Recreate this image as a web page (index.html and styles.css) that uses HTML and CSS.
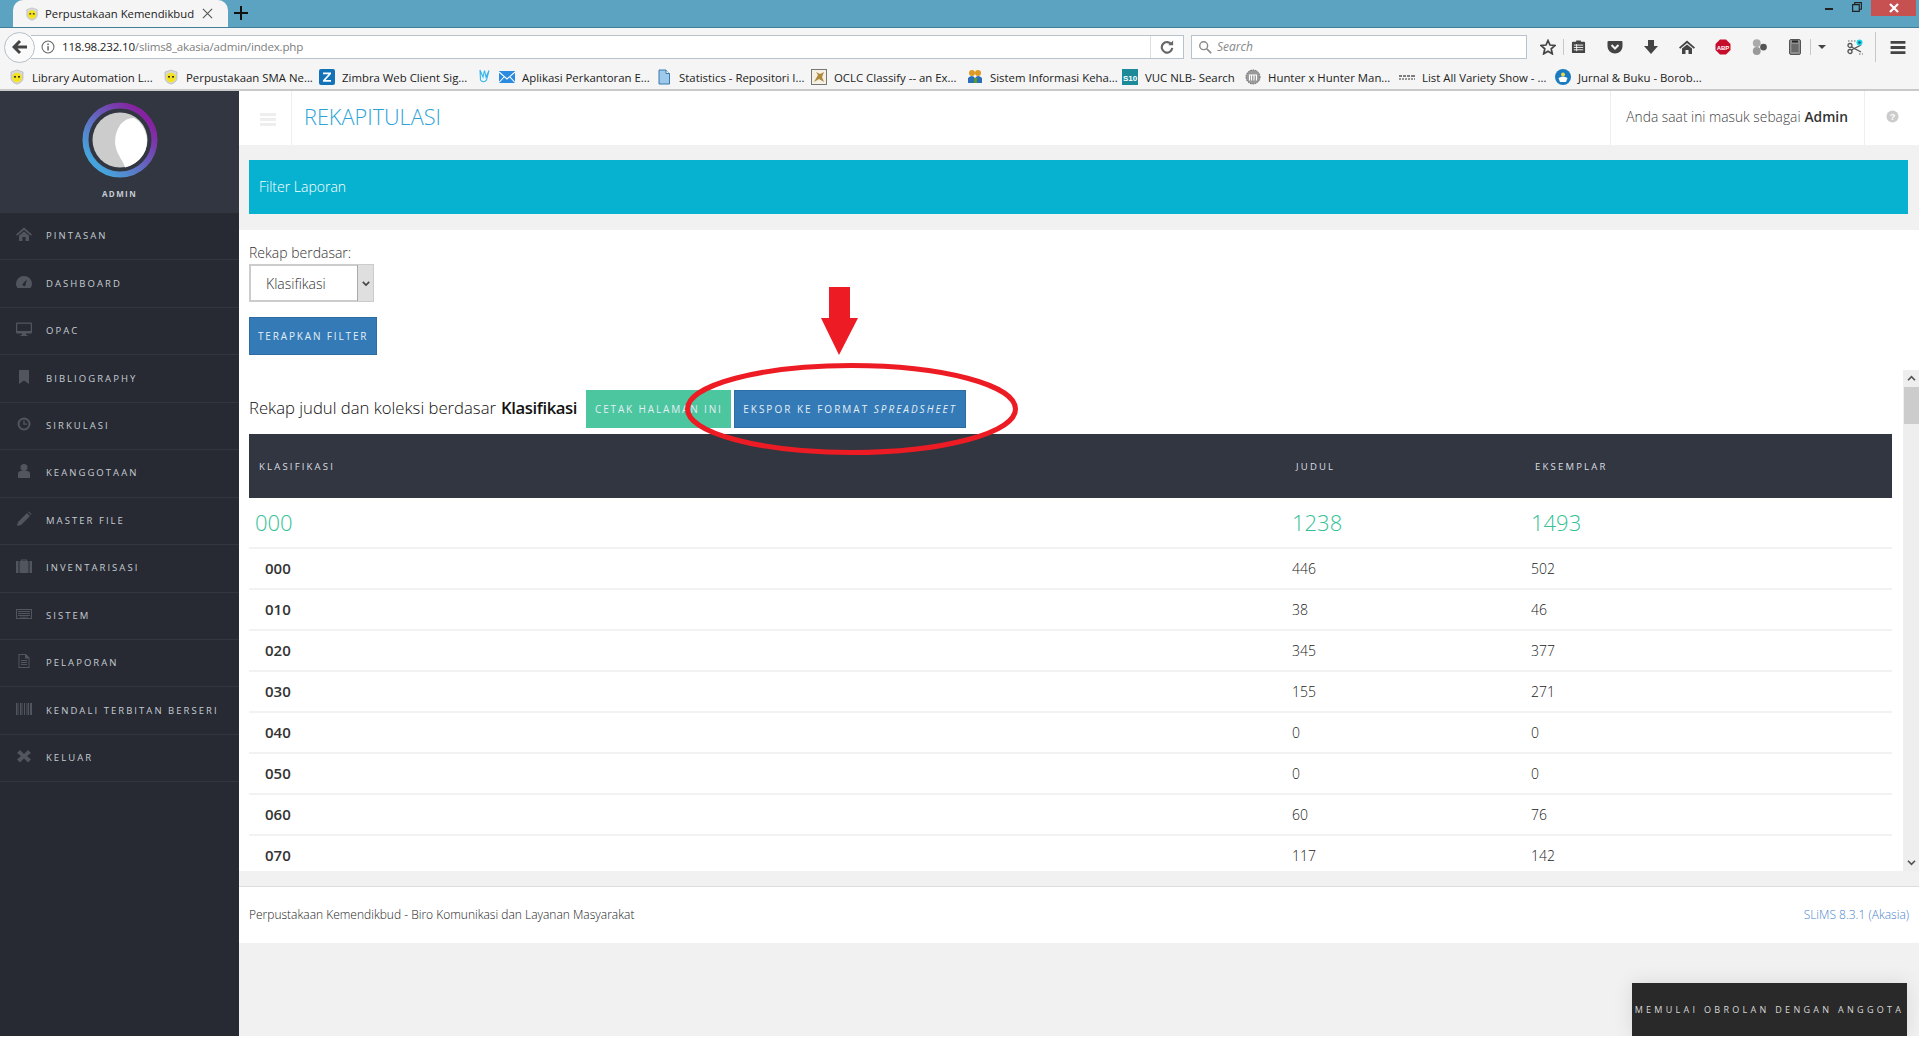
FILE: index.html
```html
<!DOCTYPE html>
<html lang="en">
<head>
  <meta charset="UTF-8" />
  <title>Rekapitulasi - Perpustakaan Kemendikbud</title>
  <link rel="stylesheet" href="styles.css">
</head>
<body>
  <svg class="defs" width="0" height="0" aria-hidden="true">
    <defs>
      <symbol id="fav-smile" viewBox="0 0 16 16">
        <path d="M8 1 L14 3 V9 C14 12 11 14.500 8 15 C5 14.500 2 12 2 9 V3 Z" fill="#d8d8d8" stroke="#aaa" stroke-width=".6"/>
        <circle cx="8" cy="8.500" r="4.800" fill="#f4e31c"/>
        <rect x="5" y="7" width="2" height="1.600" fill="#333"/>
        <rect x="9" y="7" width="2" height="1.600" fill="#333"/>
      </symbol>
      <linearGradient id="ring" x1="0" y1="1" x2="1" y2="0">
        <stop offset="0.150" stop-color="#46a5dc"/>
        <stop offset="0.850" stop-color="#8522a0"/>
      </linearGradient>
    </defs>
  </svg>

  <div class="window">
    <!-- browser chrome -->
    <div class="tabbar">
      <div class="tab">
        <svg class="fav" viewBox="0 0 16 16"><use href="#fav-smile"/></svg>
        <span class="tab-title">Perpustakaan Kemendikbud</span>
        <svg class="tab-close" viewBox="0 0 12 12"><path d="M1 1 L11 11 M11 1 L1 11" stroke="#555" stroke-width="1.200"/></svg>
      </div>
      <svg class="new-tab" viewBox="0 0 16 16"><path d="M8 1 V15 M1 8 H15" stroke="#111" stroke-width="2"/></svg>
      <div class="win-buttons">
        <span class="win-min"></span>
        <svg class="win-restore" viewBox="0 0 11 11"><path d="M3 2.500 V.700 H10.300 V8 H8.300 M.700 2.800 H8 V10.300 H.700 Z" fill="none" stroke="#222" stroke-width="1.300"/></svg>
        <div class="win-close"><svg viewBox="0 0 10 10" width="10" height="10"><path d="M1 1 L9 9 M9 1 L1 9" stroke="#fff" stroke-width="2.200"/></svg></div>
      </div>
    </div>

    <div class="toolbar">
      <div class="back-btn"><svg viewBox="0 0 16 16" width="16" height="16"><path d="M8 2 L2 8 L8 14 M2.500 8 H15" fill="none" stroke="#444" stroke-width="3"/></svg></div>
      <div class="urlbar">
        <svg class="info" viewBox="0 0 16 16"><circle cx="8" cy="8" r="6.800" fill="none" stroke="#666" stroke-width="1.200"/><rect x="7.200" y="7" width="1.700" height="5" fill="#666"/><rect x="7.200" y="4" width="1.700" height="1.800" fill="#666"/></svg>
        <span class="url"><span class="url-host">118.98.232.10</span>/slims8_akasia/admin/index.php</span>
        <span class="url-reload"><svg viewBox="0 0 16 16" width="14" height="14"><path d="M13 5 A6 6 0 1 0 14 9" fill="none" stroke="#666" stroke-width="2.400"/><path d="M9.500 6 H15 V.500 Z" fill="#666"/></svg></span>
      </div>
      <div class="searchbar">
        <svg viewBox="0 0 16 16" width="14" height="14"><circle cx="6.500" cy="6.500" r="4.500" fill="none" stroke="#888" stroke-width="1.600"/><path d="M10 10 L15 15" stroke="#888" stroke-width="2"/></svg>
        <span class="search-text">Search</span>
      </div>
      <div class="tools">
        <svg class="tool t-star" viewBox="0 0 16 16"><path d="M8 1.500 L10 6 L15 6.500 L11.200 9.800 L12.300 14.800 L8 12.200 L3.700 14.800 L4.800 9.800 L1 6.500 L6 6 Z" fill="none" stroke="#444" stroke-width="1.700"/></svg>
        <span class="tool-sep"></span>
        <svg class="tool t-list" viewBox="0 0 16 16"><path d="M2 3 H5.500 V1.500 H10.500 V3 H14 A1 1 0 0 1 15 4 V14 A1 1 0 0 1 14 15 H2 A1 1 0 0 1 1 14 V4 A1 1 0 0 1 2 3 Z" fill="#444"/><path d="M3 6.500 H13 M3 9 H13 M3 11.500 H13 M6 5.500 V13" stroke="#f4f4f4" stroke-width="1"/></svg>
        <svg class="tool t-pocket" viewBox="0 0 16 16"><path d="M1.500 2 H14.500 A1 1 0 0 1 15.500 3 V7.500 A7.500 7 0 0 1 .500 7.500 V3 A1 1 0 0 1 1.500 2 Z" fill="#444"/><path d="M4.500 6 L8 9.500 L11.500 6" fill="none" stroke="#f4f4f4" stroke-width="2"/></svg>
        <svg class="tool t-down" viewBox="0 0 16 16"><path d="M5 1 H11 V7 H15 L8 15 L1 7 H5 Z" fill="#444"/></svg>
        <svg class="tool t-home" viewBox="0 0 16 16"><path d="M8 1.500 L16 8.500 L14.800 9.800 L8 4 L1.200 9.800 L0 8.500 Z M3 9.500 L8 5.500 L13 9.500 V15 H9.500 V11 H6.500 V15 H3 Z" fill="#444"/></svg>
        <svg class="tool t-abp" viewBox="0 0 16 16"><path d="M5 .500 H11 L15.500 5 V11 L11 15.500 H5 L.500 11 V5 Z" fill="#c70d2c"/><text x="8" y="10.800" text-anchor="middle" class="abp-text">ABP</text></svg>
        <svg class="tool t-dots" viewBox="0 0 16 16"><circle cx="6" cy="4.500" r="3.500" fill="#aaa"/><circle cx="6" cy="11.500" r="3.500" fill="#999"/><circle cx="12" cy="8" r="3" fill="#555"/></svg>
        <svg class="tool t-card" viewBox="0 0 16 16"><rect x="2.500" y=".500" width="11" height="15" rx="1.500" fill="#8f8f8f" stroke="#555"/><rect x="5" y="1.500" width="6" height="2" fill="#222"/><path d="M4.500 6 H11.500 M4.500 8 H11.500 M4.500 10 H11.500 M4.500 12 H11.500" stroke="#444"/></svg>
        <span class="tool-sep"></span>
        <span class="tool-caret"></span>
        <svg class="tool t-scissors" viewBox="0 0 16 16"><circle cx="3" cy="12.500" r="2" fill="none" stroke="#555" stroke-width="1.300"/><circle cx="3" cy="6.500" r="2" fill="none" stroke="#555" stroke-width="1.300"/><path d="M4.500 11 L14 6 M4.500 8 L14 13" stroke="#555" stroke-width="1.400"/><path d="M1 2 H9 M12 15 H16" stroke="#666" stroke-dasharray="1.500 1.500"/><circle cx="12.500" cy="3.500" r="3" fill="#18dbe8"/><circle cx="12.500" cy="3.500" r="1.300" fill="#1b5a80"/></svg>
        <span class="tool-sep tall"></span>
        <svg class="tool t-menu" viewBox="0 0 16 14"><path d="M0 1.500 H16 M0 7 H16 M0 12.500 H16" stroke="#444" stroke-width="3"/></svg>
      </div>
    </div>

    <div class="bookmarks">
      <a class="bm bm-1"><svg viewBox="0 0 16 16"><use href="#fav-smile"/></svg>Library Automation L...</a>
      <a class="bm bm-2"><svg viewBox="0 0 16 16"><use href="#fav-smile"/></svg>Perpustakaan SMA Ne...</a>
      <a class="bm bm-3"><svg viewBox="0 0 16 16"><rect width="16" height="16" rx="2" fill="#1372b8"/><path d="M4 3.500 H12 V5 L6.500 11 H12 V12.800 H4 V11.300 L9.500 5.300 H4 Z" fill="#fff"/></svg>Zimbra Web Client Sig...</a>
      <a class="bm bm-4"><svg viewBox="0 0 16 16"><path d="M4 1 L7 8 L8.500 1.500 L10 8 L13 1.500 L10.500 11 A3.500 3.500 0 0 1 4.500 11 Z" fill="#eaf8ff" stroke="#37b4ea" stroke-width="1.100"/></svg></a>
      <a class="bm bm-5"><svg viewBox="0 0 16 16"><rect y="2" width="16" height="12" fill="#2a8be0"/><path d="M0 3 L8 10 L16 3 M0 13.500 L5.500 7.500 M16 13.500 L10.500 7.500" fill="none" stroke="#fff" stroke-width="1.100"/></svg>Aplikasi Perkantoran E...</a>
      <a class="bm bm-6"><svg viewBox="0 0 16 16"><path d="M3 1 H10 L13.500 4.500 V15 H3 Z" fill="#9cc9ec" stroke="#3d78a8"/><path d="M10 1 V4.500 H13.500" fill="#fff" stroke="#3d78a8"/></svg>Statistics - Repositori I...</a>
      <a class="bm bm-7"><svg viewBox="0 0 16 16"><rect x=".500" y=".500" width="15" height="15" fill="#f4f0e4" stroke="#777"/><path d="M3 13 L7 6 L5 3 L9 5 L13 3 L11 8 L13 13 L8 10 Z" fill="#b08a3c"/></svg>OCLC Classify -- an Ex...</a>
      <a class="bm bm-8"><svg viewBox="0 0 16 16"><circle cx="5" cy="4" r="3" fill="#dd9a22"/><circle cx="11" cy="4" r="3" fill="#dd9a22"/><path d="M1 14 V9 Q5 5 8 9 Q11 5 15 9 V14 Z" fill="#2a6fb8"/><rect x="7" y="9" width="3" height="5" fill="#5c9a2c"/></svg>Sistem Informasi Keha...</a>
      <a class="bm bm-9"><svg viewBox="0 0 16 16"><rect width="16" height="16" fill="#1d8a99"/><text x="8" y="11.500" text-anchor="middle" class="s10-text">S10</text></svg>VUC NLB- Search</a>
      <a class="bm bm-10"><svg viewBox="0 0 16 16"><circle cx="8" cy="8" r="7" fill="#9a9a9a"/><circle cx="8" cy="8" r="7" fill="none" stroke="#666" stroke-dasharray="1.500 1"/><path d="M4.500 11.500 V6 H6.500 V11.500 M6.500 6 H9 V11.500 M9 6 H11.500 V11.500" fill="none" stroke="#fff" stroke-width="1.100"/></svg>Hunter x Hunter Man...</a>
      <a class="bm bm-11"><svg viewBox="0 0 16 16"><path d="M0 7 H3 M4 7 H7 M8 7 H11 M12 7 H16" stroke="#555" stroke-width="1.500"/><path d="M0 10 H16" stroke="#777" stroke-width="1.500" stroke-dasharray="2 1"/></svg>List All Variety Show - ...</a>
      <a class="bm bm-12"><svg viewBox="0 0 16 16"><circle cx="8" cy="8" r="8" fill="#1a7cc0"/><path d="M3.500 9 Q8 6 12.500 9 L11 13 H5 Z" fill="#fff"/><circle cx="8" cy="5.500" r="2" fill="#f2d64a"/></svg>Jurnal &amp; Buku - Borob...</a>
    </div>

    <!-- the page itself -->
    <div class="app">
      <aside class="sidebar">
        <div class="profile">
          <svg class="avatar" viewBox="0 0 76 76">
            <circle cx="38" cy="38" r="34.500" fill="none" stroke="url(#ring)" stroke-width="6"/>
            <circle cx="38" cy="38" r="27.500" fill="#ccc"/>
            <path d="M52 16 C60 20 65 30 65 39 C65 52 56 62 43 65.500 C42 60 36 54 34 46 C31 35 36 16 52 16 Z" fill="#fff"/>
          </svg>
          <div class="profile-name">ADMIN</div>
        </div>
        <nav class="menu">
          <a class="menu-item"><svg viewBox="0 0 16 16"><path d="M8 1.500 L16 8.500 L14.800 9.800 L8 4 L1.200 9.800 L0 8.500 Z M3 9.500 L8 5.500 L13 9.500 V15 H9.500 V11 H6.500 V15 H3 Z"/></svg>PINTASAN</a>
          <a class="menu-item"><svg viewBox="0 0 16 16"><path d="M8 2 A8 8 0 0 1 16 10 Q16 12.500 14.500 14 H1.500 Q0 12.500 0 10 A8 8 0 0 1 8 2 Z M7 9.500 A1.500 1.500 0 1 0 9.500 11 L10.800 5.500 Z" fill-rule="evenodd"/></svg>DASHBOARD</a>
          <a class="menu-item"><svg viewBox="0 0 16 16"><path d="M1 1.500 H15 A1 1 0 0 1 16 2.500 V11.500 A1 1 0 0 1 15 12.500 H10 V14 H11.500 V15 H4.500 V14 H6 V12.500 H1 A1 1 0 0 1 0 11.500 V2.500 A1 1 0 0 1 1 1.500 Z M1.200 2.700 V10 H14.800 V2.700 Z" fill-rule="evenodd"/></svg>OPAC</a>
          <a class="menu-item"><svg viewBox="0 0 16 16"><path d="M3 1 H13 V15 L8 11.500 L3 15 Z"/></svg>BIBLIOGRAPHY</a>
          <a class="menu-item"><svg viewBox="0 0 16 16"><path d="M8 1.500 A6.500 6.500 0 1 0 8 14.500 A6.500 6.500 0 1 0 8 1.500 Z M8 3.500 A4.500 4.500 0 1 1 8 12.500 A4.500 4.500 0 1 1 8 3.500 Z M7.300 4.500 V8.800 H11 V7.600 H8.700 V4.500 Z" fill-rule="evenodd"/></svg>SIRKULASI</a>
          <a class="menu-item"><svg viewBox="0 0 16 16"><circle cx="8" cy="4.500" r="3.500"/><path d="M2 15 V11 Q2 8 5 8 H11 Q14 8 14 11 V15 Z"/></svg>KEANGGOTAAN</a>
          <a class="menu-item"><svg viewBox="0 0 16 16"><path d="M1 15 L2 11 L11 2 L14 5 L5 14 Z M12 1 L13 .5 L15.500 3 L15 4 Z"/></svg>MASTER FILE</a>
          <a class="menu-item"><svg viewBox="0 0 16 16"><path d="M5 3 V1.500 H11 V3 H16 V15 H0 V3 Z M6.200 3 H9.800 V2.500 H6.200 Z M2.500 3 V15 H3.500 V3 Z M12.500 3 V15 H13.500 V3 Z" fill-rule="evenodd"/></svg>INVENTARISASI</a>
          <a class="menu-item"><svg viewBox="0 0 16 16"><path d="M0 3 H16 V13 H0 Z M1 4 V12 H15 V4 Z M2 5 H14 V6 H2 Z M2 7 H14 V8 H2 Z M2 9 H14 V10 H2 Z M4 10.800 H12 V11.500 H4 Z" fill-rule="evenodd"/></svg>SISTEM</a>
          <a class="menu-item"><svg viewBox="0 0 16 16"><path d="M2.500 1 H10 L13.500 4.500 V15 H2.500 Z M3.500 2 V14 H12.500 V5.500 H9 V2 Z M5 7 H11 V8 H5 Z M5 9 H11 V10 H5 Z M5 11 H11 V12 H5 Z" fill-rule="evenodd"/></svg>PELAPORAN</a>
          <a class="menu-item"><svg viewBox="0 0 16 16"><path d="M0 2 H1.500 V14 H0 Z M2.500 2 H3 V14 H2.500 Z M4 2 H5.500 V14 H4 Z M6.500 2 H7 V14 H6.500 Z M8 2 H9 V14 H8 Z M10 2 H10.500 V14 H10 Z M11.500 2 H13 V14 H11.500 Z M14 2 H16 V14 H14 Z"/></svg>KENDALI TERBITAN BERSERI</a>
          <a class="menu-item"><svg viewBox="0 0 16 16"><path d="M4 2 L8 6 L12 2 L15 5 L11 8 L15 11.500 L12 14.500 L8 10.500 L4 14.500 L1 11.500 L5 8 L1 5 Z"/></svg>KELUAR</a>
        </nav>
      </aside>

      <main class="main">
        <header class="topbar">
          <div class="burger"><span></span><span></span><span></span></div>
          <h1 class="page-title">REKAPITULASI</h1>
          <div class="user-info">Anda saat ini masuk sebagai <strong>Admin</strong></div>
          <div class="help"><svg viewBox="0 0 14 14" width="13" height="13"><circle cx="7" cy="7" r="6.500" fill="#ccc"/><text x="7" y="10.500" text-anchor="middle" class="help-mark">?</text></svg></div>
        </header>

        <div class="filter-bar">Filter Laporan</div>

        <section class="panel">
          <form class="filter-form">
            <label class="filter-label" for="rekap">Rekap berdasar:</label>
            <div class="select-wrap">
              <select id="rekap"><option>Klasifikasi</option></select>
              <span class="select-arrow"><svg viewBox="0 0 10 8" width="8" height="7"><path d="M1 2 L5 6 L9 2" fill="none" stroke="#444" stroke-width="2"/></svg></span>
            </div>
            <button type="button" class="btn btn-blue">TERAPKAN FILTER</button>
          </form>

          <div class="frame">
            <div class="frame-body">
              <div class="report-head">
                <span class="report-title">Rekap judul dan koleksi berdasar <strong>Klasifikasi</strong></span>
                <button type="button" class="btn btn-green">CETAK HALAMAN INI</button>
                <button type="button" class="btn btn-blue btn-export">EKSPOR KE FORMAT <em>SPREADSHEET</em></button>
              </div>
              <table class="report">
                <colgroup><col class="col-a"><col class="col-b"><col class="col-c"></colgroup>
                <thead>
                  <tr><th>KLASIFIKASI</th><th>JUDUL</th><th>EKSEMPLAR</th></tr>
                </thead>
                <tbody>
                  <tr class="group"><td>000</td><td>1238</td><td>1493</td></tr>
                  <tr><td class="code">000</td><td>446</td><td>502</td></tr>
                  <tr><td class="code">010</td><td>38</td><td>46</td></tr>
                  <tr><td class="code">020</td><td>345</td><td>377</td></tr>
                  <tr><td class="code">030</td><td>155</td><td>271</td></tr>
                  <tr><td class="code">040</td><td>0</td><td>0</td></tr>
                  <tr><td class="code">050</td><td>0</td><td>0</td></tr>
                  <tr><td class="code">060</td><td>60</td><td>76</td></tr>
                  <tr><td class="code">070</td><td>117</td><td>142</td></tr>
                </tbody>
              </table>
            </div>
            <div class="scrollbar">
              <svg viewBox="0 0 10 8" width="9" height="7"><path d="M1 6 L5 2 L9 6" fill="none" stroke="#555" stroke-width="2"/></svg>
              <div class="scroll-thumb"></div>
              <svg class="scroll-down" viewBox="0 0 10 8" width="9" height="7"><path d="M1 2 L5 6 L9 2" fill="none" stroke="#555" stroke-width="2"/></svg>
            </div>
          </div>
        </section>

        <footer class="footer">
          <span>Perpustakaan Kemendikbud - Biro Komunikasi dan Layanan Masyarakat</span>
          <a class="version">SLiMS 8.3.1 (Akasia)</a>
        </footer>

        <div class="chat">MEMULAI OBROLAN DENGAN ANGGOTA</div>
      </main>
    </div>

    <!-- red annotation drawn over the screenshot -->
    <svg class="annotation" viewBox="0 0 360 180" width="360" height="180">
      <path d="M9 3 H30 V34 H38 L19 71 L1 34 H9 Z" transform="translate(140 -1)" fill="#ed1c24"/>
      <ellipse cx="171.500" cy="124" rx="164" ry="43.500" fill="none" stroke="#ed1c24" stroke-width="5"/>
    </svg>
  </div>
</body>
</html>
```

FILE: styles.css
```css
* {
  box-sizing: border-box;
}

html,
body {
  margin: 0;
  padding: 0;
  background: #fff;
  overflow: hidden;
}

body {
  font-family: "Open Sans", sans-serif;
  font-weight: 300;
  color: #333;
  height: 1038px;
}

.defs {
  position: absolute;
}

.window {
  position: relative;
  width: 1919px;
  height: 1036px;
  display: flex;
  flex-direction: column;
  overflow: hidden;
}

/* browser chrome */
.tabbar {
  flex: 0 0 27px;
  display: flex;
  align-items: flex-start;
  background: #5ba3c1;
  border-bottom: 1px solid #3f7f9a;
  padding-left: 13px;
}

.tab {
  width: 215px;
  height: 27px;
  display: flex;
  align-items: center;
  background: #f5f5f5;
  border-radius: 10px 10px 0 0;
  padding: 0 14px 0 12px;
  font-weight: 400;
  font-size: 11.3px;
  color: #222;
}

.fav {
  width: 14px;
  height: 14px;
  flex: none;
}

.tab-title {
  margin-left: 6px;
  width: 148px;
  white-space: nowrap;
}

.tab-close {
  width: 11px;
  height: 11px;
  margin-left: 9px;
}

.new-tab {
  width: 16px;
  height: 16px;
  margin: 5px 0 0 5px;
}

.win-buttons {
  margin-left: auto;
  display: flex;
  align-items: flex-start;
  padding-right: 3px;
}

.win-min {
  width: 8px;
  height: 2px;
  background: #222;
  margin: 8px 19px 0 0;
}

.win-restore {
  width: 10px;
  height: 10px;
  margin: 2px 9px 0 0;
}

.win-close {
  width: 45px;
  height: 16px;
  background: #c75050;
  display: flex;
  align-items: center;
  justify-content: center;
}

.toolbar {
  flex: 0 0 38px;
  display: flex;
  align-items: center;
  background: #f5f5f5;
  padding-left: 4px;
  position: relative;
}

.back-btn {
  width: 31px;
  height: 31px;
  border-radius: 50%;
  border: 1px solid #b5c0c9;
  background: #fafafa;
  display: flex;
  align-items: center;
  justify-content: center;
  flex: none;
  z-index: 1;
}

.urlbar {
  width: 1153px;
  height: 24px;
  margin-left: -4px;
  display: flex;
  align-items: center;
  background: #fff;
  border: 1px solid #b8c2cc;
  border-left: 0;
  padding-left: 10px;
  font-weight: 400;
  font-size: 11.6px;
  color: #808080;
}

.info {
  width: 14px;
  height: 14px;
  flex: none;
}

.url {
  margin: 0 0 2px 7px;
  letter-spacing: -0.2px;
}

.url-host {
  color: #222;
}

.url-reload {
  margin-left: auto;
  width: 33px;
  height: 22px;
  border-left: 1px solid #ddd;
  display: flex;
  align-items: center;
  justify-content: center;
}

.searchbar {
  width: 336px;
  height: 24px;
  margin-left: 7px;
  display: flex;
  align-items: center;
  gap: 5px;
  background: #fff;
  border: 1px solid #b8c2cc;
  padding-left: 6px;
  font-weight: 400;
  font-style: italic;
  font-size: 12px;
  color: #888;
}

.search-text {
  margin-bottom: 2px;
}

.tools {
  flex: 1;
  display: flex;
  align-items: center;
  height: 30px;
  position: relative;
}

.tool {
  position: absolute;
  top: 7px;
  width: 16px;
  height: 16px;
}

.t-star { left: 13px; }
.t-list { left: 44px; width: 15px; height: 15px; }
.t-pocket { left: 80px; }
.t-down { left: 116px; }
.t-home { left: 152px; }
.t-abp { left: 188px; }
.t-dots { left: 223px; width: 18px; height: 18px; top: 6px; }
.t-card { left: 260px; }
.t-scissors { left: 320px; }
.t-menu { left: 363px; top: 9px; height: 13px; }

.tool-sep {
  position: absolute;
  top: 7px;
  width: 1px;
  height: 16px;
  background: #c8c8c8;
}

.tool-sep:nth-of-type(1) { left: 36px; }
.tool-sep:nth-of-type(2) { left: 283px; }
.tool-sep.tall { left: 348px; top: 0; height: 30px; }

.tool-caret {
  position: absolute;
  left: 283px;
  top: 13px;
  margin-left: 8px;
  border: 4px solid transparent;
  border-top: 4px solid #444;
}

.abp-text {
  font: 700 6px "Liberation Sans", sans-serif;
  fill: #fff;
}

.s10-text {
  font: 700 8px "Liberation Sans", sans-serif;
  fill: #fff;
}

.help-mark {
  font: 700 10px "Liberation Sans", sans-serif;
  fill: #fff;
}

.bookmarks {
  flex: 0 0 25px;
  position: relative;
  background: #f5f5f5;
  border-bottom: 2px solid #c9c9c9;
  font-weight: 400;
  font-size: 11.4px;
  color: #222;
}

.bm {
  position: absolute;
  top: 3px;
  display: flex;
  align-items: center;
  gap: 7px;
  white-space: nowrap;
}

.bm svg {
  width: 16px;
  height: 16px;
  flex: none;
}

.bm-1 { left: 9px; }
.bm-2 { left: 163px; }
.bm-3 { left: 319px; }
.bm-4 { left: 476px; }
.bm-5 { left: 499px; }
.bm-6 { left: 656px; }
.bm-7 { left: 811px; }
.bm-8 { left: 967px; }
.bm-9 { left: 1122px; }
.bm-10 { left: 1245px; }
.bm-11 { left: 1399px; }
.bm-12 { left: 1555px; }

/* sidebar */
.app {
  flex: 1;
  display: flex;
  min-height: 0;
}

.sidebar {
  flex: 0 0 239px;
  min-width: 0;
  background: #272a32;
}

.profile {
  height: 122px;
  background: #323640;
  display: flex;
  flex-direction: column;
  align-items: center;
  padding-top: 11px;
}

.avatar {
  width: 76px;
  height: 76px;
  display: block;
}

.profile-name {
  margin-top: 10px;
  font-weight: 700;
  font-size: 8px;
  letter-spacing: 1.4px;
  color: #c5ccd3;
}

.menu-item {
  height: 47.45px;
  display: flex;
  align-items: center;
  padding: 0 0 1px 16px;
  border-bottom: 1px solid #33363e;
  font-weight: 400;
  font-size: 9.5px;
  letter-spacing: 2.05px;
  color: #c5ccd3;
  white-space: nowrap;
}

.menu-item svg {
  width: 16px;
  height: 16px;
  fill: #51555e;
  margin: 0 14px 3px 0;
  flex: none;
}

/* main column */
.main {
  flex: 1;
  min-width: 0;
  display: flex;
  flex-direction: column;
  background: #f1f1f1;
  position: relative;
}

.topbar {
  flex: 0 0 54px;
  display: flex;
  align-items: center;
  background: #fff;
}

.burger {
  width: 53px;
  height: 54px;
  border-right: 1px solid #eee;
  padding: 22px 0 0 21px;
}

.burger span {
  display: block;
  width: 16px;
  height: 3px;
  margin-bottom: 2px;
  background: #eee;
}

.page-title {
  margin: 0 0 3px 12px;
  font-weight: 300;
  font-size: 21.7px;
  color: #2ba3d6;
}

.user-info {
  margin-left: auto;
  width: 255px;
  height: 54px;
  display: flex;
  align-items: center;
  justify-content: flex-end;
  gap: 4px;
  border-left: 1px solid #eee;
  border-right: 1px solid #eee;
  padding: 0 16px 3px 0;
  font-weight: 300;
  font-size: 13.8px;
  color: #444;
  white-space: nowrap;
}

.user-info strong {
  font-weight: 600;
  color: #333;
}

.help {
  width: 54px;
  display: flex;
  justify-content: center;
  padding-bottom: 3px;
}

.filter-bar {
  height: 54px;
  margin: 15px 11px 16px 10px;
  padding: 0 0 2px 10px;
  display: flex;
  align-items: center;
  background: #06b2cf;
  color: #fff;
  font-weight: 300;
  font-size: 14px;
}

.panel {
  height: 641px;
  background: #fff;
  display: flex;
  flex-direction: column;
}

.filter-form {
  height: 140px;
  padding: 15px 10px 0;
}

.filter-label {
  display: block;
  height: 19px;
  font-size: 14px;
  line-height: 16px;
  font-weight: 300;
  color: #333;
}

.select-wrap {
  position: relative;
  width: 125px;
  height: 38px;
}

.select-wrap select {
  width: 100%;
  height: 100%;
  appearance: none;
  background: #fff;
  border: 2px solid #ccc;
  border-radius: 0;
  padding-left: 15px;
  font-family: inherit;
  font-weight: 300;
  font-size: 14px;
  color: #333;
}

.select-arrow {
  position: absolute;
  top: 1px;
  right: 1px;
  bottom: 1px;
  width: 16px;
  background: #dfdfdf;
  border-left: 1px solid #aaa;
  display: flex;
  align-items: center;
  justify-content: center;
}

.btn {
  height: 38px;
  border: 1px solid transparent;
  border-radius: 0;
  padding: 0 8px;
  font-family: inherit;
  font-weight: 400;
  font-size: 10px;
  letter-spacing: 1.85px;
  color: #e4eef6;
  white-space: nowrap;
}

.btn-blue {
  background: #337ab7;
  border-color: #2e6da4;
}

.filter-form .btn {
  display: block;
  width: 128px;
  margin-top: 15px;
}

.btn-green {
  background: #4bc69e;
  width: 145px;
  margin-left: 9px;
}

.btn-export {
  width: 232px;
  margin-left: 3px;
  letter-spacing: 2px;
}

.btn-export em {
  font-style: italic;
}

.frame {
  flex: 1;
  min-height: 0;
  display: flex;
}

.frame-body {
  flex: 1;
  min-width: 0;
  overflow: hidden;
  padding: 20px 11px 0 10px;
}

.report-head {
  height: 44px;
  display: flex;
  align-items: flex-start;
}

.report-title {
  width: 328px;
  height: 38px;
  display: flex;
  align-items: center;
  gap: 5px;
  padding-bottom: 4px;
  font-size: 16.7px;
  color: #111;
  white-space: nowrap;
}

.report-title strong {
  font-weight: 600;
  letter-spacing: -0.4px;
  color: #111;
}

.report {
  width: 1643px;
  table-layout: fixed;
  border-collapse: collapse;
}

.col-a { width: 1037px; }
.col-b { width: 239px; }
.col-c { width: 367px; }

.report th {
  height: 64px;
  padding: 0 0 0 10px;
  background: #323640;
  color: #d9dee3;
  text-align: left;
  font-weight: 400;
  font-size: 9.500px;
  letter-spacing: 2.2px;
}

.report td {
  height: 41px;
  padding: 0 0 1px 6px;
  border-bottom: 2px solid #f2f2f2;
  font-weight: 300;
  font-size: 14px;
  color: #222;
}

.report td.code {
  padding-left: 16px;
  font-weight: 600;
  font-size: 15px;
  color: #333;
}

.report .group td {
  height: 50px;
  font-size: 22px;
  color: #34c195;
}

.scrollbar {
  flex: 0 0 16px;
  display: flex;
  flex-direction: column;
  align-items: center;
  background: #eee;
  padding-top: 5px;
}

.scroll-thumb {
  width: 15px;
  height: 37px;
  margin-top: 5px;
  background: #ccc;
}

.scroll-down {
  margin-top: auto;
  margin-bottom: 5px;
}

.footer {
  height: 57px;
  margin-top: 15px;
  display: flex;
  align-items: center;
  justify-content: space-between;
  padding: 0 10px 1px 10px;
  background: #fff;
  border-top: 1px solid #ddd;
  font-weight: 300;
  font-size: 12px;
  color: #222;
}

.version {
  color: #4a84cc;
}

.chat {
  position: absolute;
  right: 12px;
  bottom: 0;
  width: 275px;
  height: 53px;
  display: flex;
  align-items: center;
  justify-content: center;
  background: #292929;
  box-shadow: 0 0 20px rgba(0, 0, 0, 0.1);
  color: #d8d8d8;
  font-weight: 400;
  font-size: 9px;
  letter-spacing: 3.3px;
  white-space: nowrap;
}

.annotation {
  position: absolute;
  left: 680px;
  top: 285px;
  pointer-events: none;
}
```
